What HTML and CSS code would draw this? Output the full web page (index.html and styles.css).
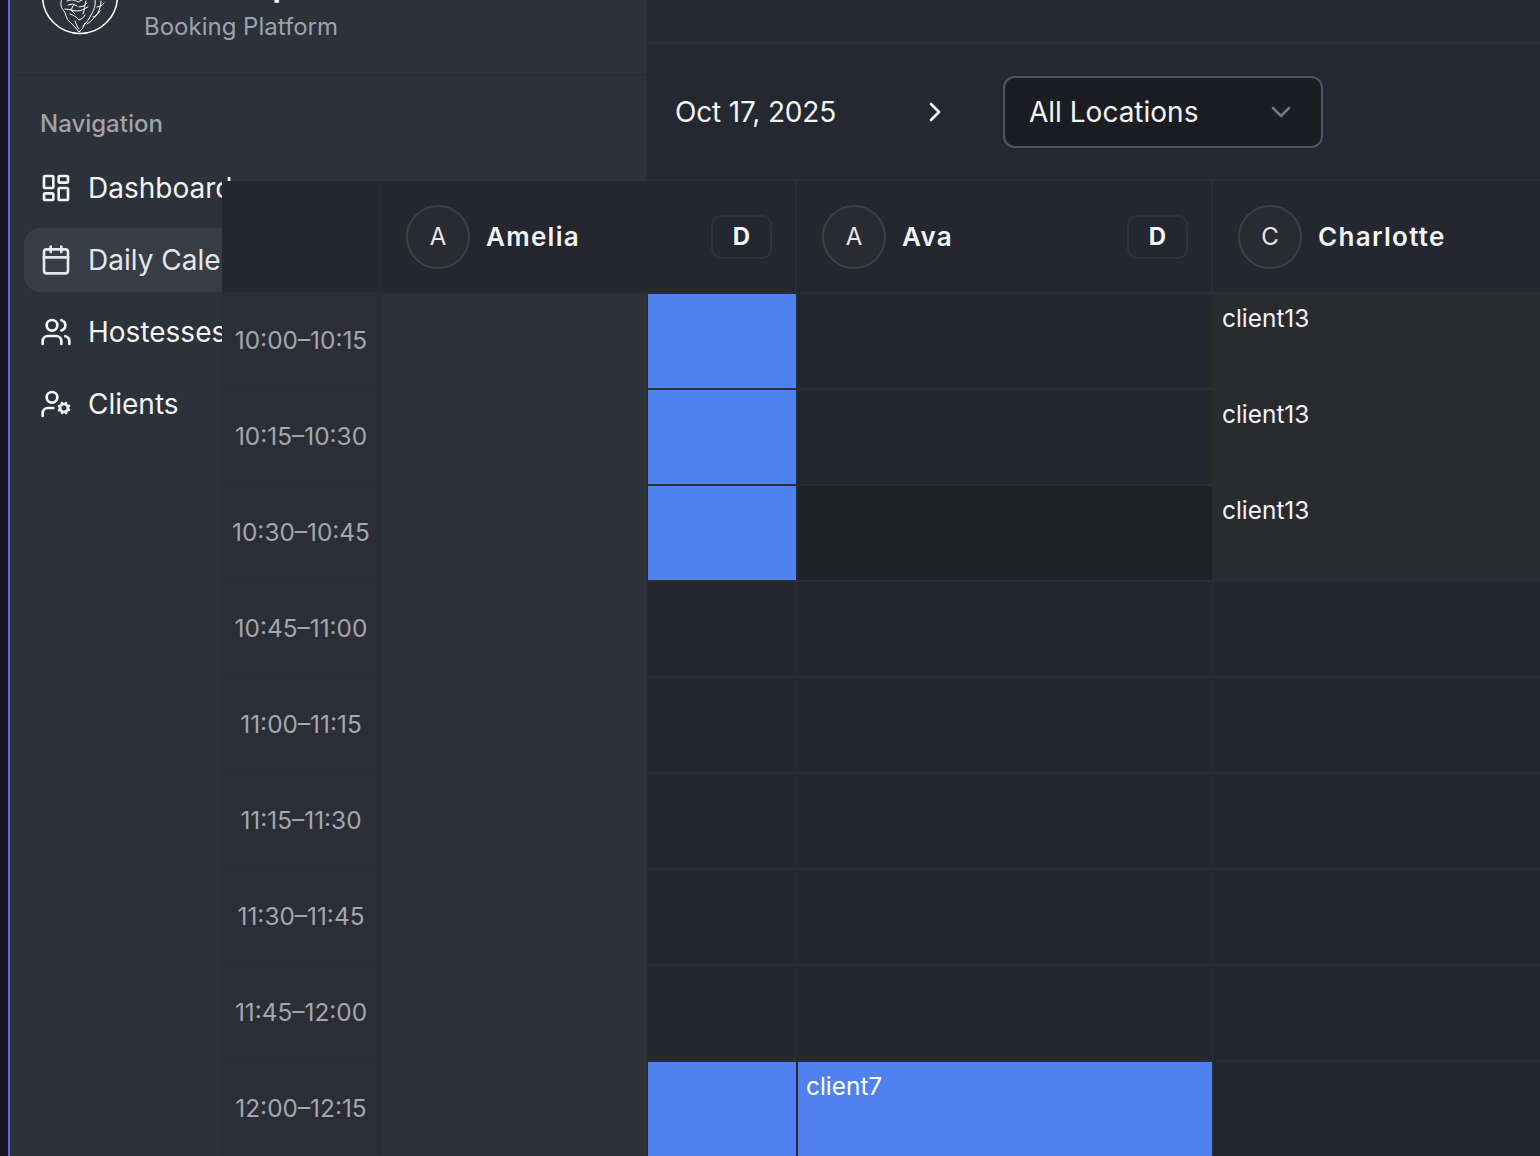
FILE: index.html
```html
<!DOCTYPE html>
<html>
<head>
    <link rel="stylesheet" href="styles.css">
</head>
<body>
    <div class="app">
        <div class="edge"></div>

        <aside class="sidebar">
            <div class="brand">
                <svg class="logo" viewBox="0 0 78 78" fill="none" stroke="#fff">
                    <circle cx="39" cy="39" r="37.5" stroke-width="1.6"/>
                    <g stroke-width="1" stroke-linecap="round" stroke-linejoin="round">
                        <path d="M22 40c-3 5-3 10 1 14 2 3 2 8 6 11 3 3 6 6 9 10 3-2 5-6 6-9"/>
                        <path d="M26 44c4-2 8-1 11 1l6-3 5-4"/>
                        <path d="M24 52c5 0 8 2 12 2s7-2 11-4"/>
                        <path d="M29 57c3 1 7 3 9 6 3-1 5-3 6-5"/>
                        <path d="M34 64c1 3 2 6 4 8"/>
                        <path d="M33 47l-3 6 4 4"/>
                        <path d="M45 44c-2 5-1 9-3 13"/>
                        <path d="M27 48l5-1 4 2"/>
                        <path d="M38 50l5-1 3-3"/>
                        <path d="M54 42c1 6-1 11-4 16-2 4-4 7-8 11"/>
                        <path d="M60 44c0 7-3 13-8 18-2 2-4 4-6 5"/>
                        <path d="M56 50c3-1 5-1 7-4"/>
                        <path d="M52 60c3-1 5-3 7-6"/>
                    </g>
                </svg>
                <div class="brand-text">
                    <div class="brand-title">LionGroup</div>
                    <div class="brand-sub">Booking Platform</div>
                </div>
            </div>

            <nav class="nav">
                <div class="nav-label">Navigation</div>
                <a class="nav-item">
                    <svg class="nav-icon" viewBox="0 0 24 24"><rect x="3" y="3" width="7" height="9" rx="1"/><rect x="14" y="3" width="7" height="5" rx="1"/><rect x="14" y="12" width="7" height="9" rx="1"/><rect x="3" y="16" width="7" height="5" rx="1"/></svg>
                    Dashboard
                </a>
                <a class="nav-item active">
                    <svg class="nav-icon" viewBox="0 0 24 24"><path d="M8 2v4"/><path d="M16 2v4"/><rect x="3" y="4" width="18" height="18" rx="2"/><path d="M3 10h18"/></svg>
                    Daily Calendar
                </a>
                <a class="nav-item">
                    <svg class="nav-icon" viewBox="0 0 24 24"><path d="M16 21v-2a4 4 0 0 0-4-4H6a4 4 0 0 0-4 4v2"/><circle cx="9" cy="7" r="4"/><path d="M22 21v-2a4 4 0 0 0-3-3.87"/><path d="M16 3.13a4 4 0 0 1 0 7.75"/></svg>
                    Hostesses
                </a>
                <a class="nav-item">
                    <svg class="nav-icon" viewBox="0 0 24 24"><path d="M10 15H6a4 4 0 0 0-4 4v2"/><circle cx="9" cy="7" r="4"/><circle cx="18" cy="15" r="3"/><path d="m21.7 16.4-.9-.3"/><path d="m15.2 13.9-.9-.3"/><path d="m16.6 18.7.3-.9"/><path d="m19.1 12.2.3-.9"/><path d="m19.6 18.7-.4-1"/><path d="m16.8 12.3-.4-1"/><path d="m14.3 16.6 1-.4"/><path d="m20.7 13.8 1-.4"/></svg>
                    Clients
                </a>
            </nav>
        </aside>

        <main class="main">
            <div class="topbar"></div>
            <div class="toolbar">
                <div class="date">Oct 17, 2025</div>
                <svg class="next" viewBox="0 0 24 24"><path d="m9 18 6-6-6-6"/></svg>
                <div class="select">
                    All Locations
                    <svg class="select-arrow" viewBox="0 0 24 24"><path d="m6 9 6 6 6-6"/></svg>
                </div>
            </div>
        </main>

        <!-- calendar hangs over the sidebar -->
        <div class="calendar">
            <div class="corner"></div>
            <div class="col-head"><span class="avatar">A</span><span class="name">Amelia</span><span class="badge">D</span></div>
            <div class="col-head"><span class="avatar">A</span><span class="name">Ava</span><span class="badge">D</span></div>
            <div class="col-head"><span class="avatar">C</span><span class="name">Charlotte</span><span class="badge">D</span></div>

            <div class="time">10:00–10:15</div>
            <div class="cell first"><div class="slot blue"></div></div>
            <div class="cell"><div class="slot"></div></div>
            <div class="cell"><div class="slot booked">client13</div></div>

            <div class="time">10:15–10:30</div>
            <div class="cell first"><div class="slot blue"></div></div>
            <div class="cell"><div class="slot"></div></div>
            <div class="cell"><div class="slot booked">client13</div></div>

            <div class="time">10:30–10:45</div>
            <div class="cell first"><div class="slot blue"></div></div>
            <div class="cell"><div class="slot dark"></div></div>
            <div class="cell"><div class="slot booked">client13</div></div>

            <div class="time">10:45–11:00</div>
            <div class="cell first"><div class="slot"></div></div>
            <div class="cell"><div class="slot"></div></div>
            <div class="cell"><div class="slot"></div></div>

            <div class="time">11:00–11:15</div>
            <div class="cell first"><div class="slot"></div></div>
            <div class="cell"><div class="slot"></div></div>
            <div class="cell"><div class="slot"></div></div>

            <div class="time">11:15–11:30</div>
            <div class="cell first"><div class="slot"></div></div>
            <div class="cell"><div class="slot"></div></div>
            <div class="cell"><div class="slot"></div></div>

            <div class="time">11:30–11:45</div>
            <div class="cell first"><div class="slot"></div></div>
            <div class="cell"><div class="slot"></div></div>
            <div class="cell"><div class="slot"></div></div>

            <div class="time">11:45–12:00</div>
            <div class="cell first"><div class="slot"></div></div>
            <div class="cell"><div class="slot"></div></div>
            <div class="cell"><div class="slot"></div></div>

            <div class="time">12:00–12:15</div>
            <div class="cell first"><div class="slot blue"></div></div>
            <div class="cell"><div class="slot blue">client7</div></div>
            <div class="cell"><div class="slot"></div></div>
        </div>
    </div>
</body>
</html>
```
FILE: styles.css
```css
* {
    box-sizing: border-box;
}

html, body {
    margin: 0;
    height: 100%;
    overflow: hidden;
}

body {
    font-family: Inter, "Noto Sans", sans-serif;
    background: #252830;
    color: #f3f4f6;
}

.app {
    position: relative;
    display: flex;
    width: 1540px;
    height: 1156px;
    overflow: hidden;
}

.edge {
    flex: 0 0 8px;
    background: #15151f;
}

/* sidebar */
.sidebar {
    flex: 0 0 639px;
    background: #2d3139;
    border-left: 2px solid #6d5ef0;
}

.brand {
    display: flex;
    align-items: flex-start;
    gap: 25px;
    margin-top: -43px;
    padding: 0 0 31px 31px;
    border-bottom: 2px solid #2a2e35;
}

.logo {
    flex: none;
    width: 78px;
    height: 78px;
}

.brand-text {
    margin-top: 10px;
}

.brand-title {
    font-size: 29px;
    font-weight: 700;
    line-height: 40px;
    margin-bottom: 4px;
    color: #fff;
}

.brand-sub {
    font-size: 24px;
    line-height: 32px;
    color: #9ca3af;
}

.nav {
    display: flex;
    flex-direction: column;
    gap: 8px;
    padding: 16px 0 0 14px;
    width: 300px;
}

.nav-label {
    font-size: 24px;
    font-weight: 500;
    line-height: 32px;
    color: #a0a3a9;
    padding-left: 16px;
    margin: 16px 0 8px;
}

.nav-item {
    display: flex;
    align-items: center;
    gap: 16px;
    height: 64px;
    padding-left: 16px;
    border-radius: 16px;
    font-size: 28px;
    white-space: nowrap;
    color: #f3f4f6;
}

.nav-item.active {
    background: #383c45;
    color: #e5e7eb;
}

.nav-icon {
    flex: none;
    width: 32px;
    height: 32px;
    fill: none;
    stroke: currentColor;
    stroke-width: 2;
    stroke-linecap: round;
    stroke-linejoin: round;
}

/* main area */
.main {
    flex: 1;
    min-width: 0;
}

.topbar {
    height: 44px;
    border-bottom: 2px solid #2a2d35;
}

.toolbar {
    display: flex;
    align-items: center;
    height: 137px;
    padding-left: 28px;
    border-bottom: 2px solid #2a2d35;
}

.date {
    width: 244px;
    font-size: 28px;
    letter-spacing: -0.15px;
    color: #f3f4f6;
}

.next {
    flex: none;
    width: 32px;
    height: 32px;
    fill: none;
    stroke: #f3f4f6;
    stroke-width: 2;
    stroke-linecap: round;
    stroke-linejoin: round;
}

.select {
    display: flex;
    align-items: center;
    justify-content: space-between;
    width: 320px;
    height: 72px;
    margin-left: 52px;
    padding: 0 24px;
    border: 2px solid #4b5563;
    border-radius: 12px;
    background: #1c1d22;
    font-size: 28px;
}

.select-arrow {
    width: 32px;
    height: 32px;
    fill: none;
    stroke: #71757d;
    stroke-width: 2;
    stroke-linecap: round;
    stroke-linejoin: round;
}

/* calendar grid */
.calendar {
    position: absolute;
    left: 222px;
    top: 181px;
    display: grid;
    grid-template-columns: 159px 416px 416px 416px;
    grid-template-rows: 113px repeat(9, 96px);
}

.corner {
    background: #24272f;
    border-right: 1px solid #2a2d35;
    border-bottom: 2px solid #2a2d35;
}

.col-head {
    display: flex;
    align-items: center;
    padding: 0 23px 0 24px;
    background: #24272f;
    border-right: 2px solid #2a2d35;
    border-bottom: 2px solid #2a2d35;
}

.avatar {
    display: flex;
    flex: none;
    align-items: center;
    justify-content: center;
    width: 64px;
    height: 64px;
    margin-left: 1px;
    border: 2px solid #3d3f44;
    border-radius: 50%;
    background: #2a2b30;
    font-size: 24px;
    color: #e5e7eb;
}

.name {
    flex: 1;
    margin-left: 16px;
    font-size: 26px;
    font-weight: 600;
    letter-spacing: 1.3px;
    color: #f3f4f6;
}

.badge {
    flex: none;
    width: 61px;
    height: 44px;
    border: 2px solid #2f323a;
    border-radius: 10px;
    font-size: 24px;
    font-weight: 700;
    line-height: 40px;
    text-align: center;
}

.time {
    display: flex;
    align-items: center;
    justify-content: center;
    padding-bottom: 2px;
    background: #2b2e36;
    border-right: 1px solid #2a2d35;
    border-bottom: 2px solid #292c33;
    font-size: 24.4px;
    color: #a3a6ad;
}

.cell {
    display: flex;
}

.cell.first {
    padding-left: 267px;
}

.slot {
    flex: 1;
    min-width: 0;
    margin-left: 1px;
    padding: 8px;
    background: #24272f;
    border-right: 1px solid #2a2d35;
    border-bottom: 2px solid #2a2d35;
    font-size: 24.4px;
    line-height: 32px;
    color: #f3f4f6;
}

.cell.first .slot {
    margin-left: 0;
}

.slot.blue {
    background: #4f82ee;
    border-right-color: #252a3a;
    border-bottom-color: #2b2f38;
    color: #fff;
}

.slot.dark {
    background: #212226;
}

.slot.booked {
    margin-left: -1px;
    padding-left: 10px;
    background: #2a2b2f;
    border-right-color: transparent;
    border-bottom-color: transparent;
}
```
